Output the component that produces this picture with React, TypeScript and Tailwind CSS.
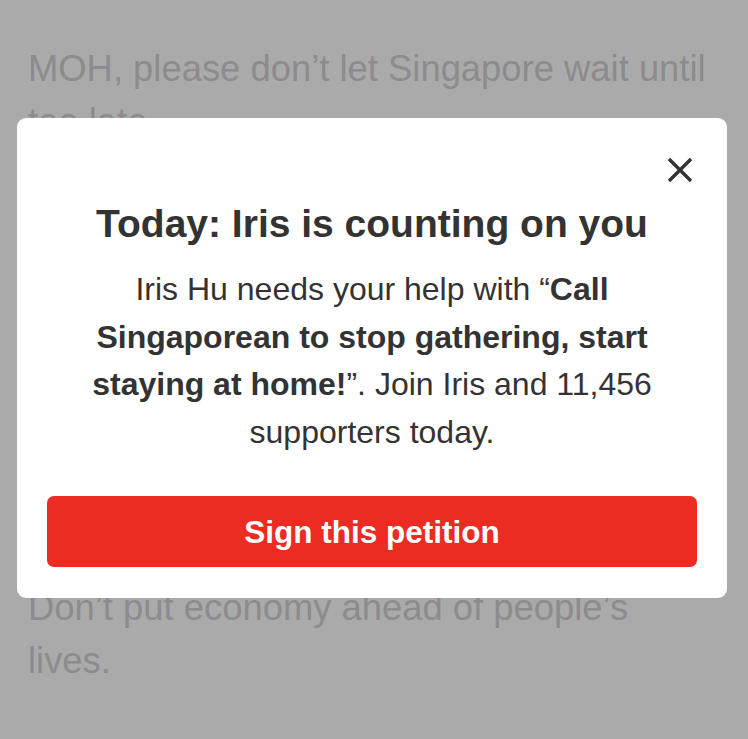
import React from 'react';

const CloseIcon: React.FC = () => (
  <svg width="26" height="26" viewBox="0 0 26 26" fill="none" stroke="#333333" strokeWidth={3.4} strokeLinecap="butt">
    <path d="M2 2L24 24M24 2L2 24" />
  </svg>
);

export default function App() {
  return (
    <div className="relative w-[748px] h-[739px] overflow-hidden bg-[#aaaaaa] font-['Liberation_Sans',Arial,sans-serif]">
      {/* page behind the dialog */}
      <div className="px-[28px] pt-[42px] text-[36.4px] leading-[53px] text-[#8d8b8d] font-light">
        <p>
          MOH, please don’t let Singapore wait until
          <br />
          too late.
        </p>
        <p className="mt-[433px]">
          Don’t put economy ahead of people’s
          <br />
          lives.
        </p>
      </div>

      {/* dialog */}
      <div className="absolute left-[17px] top-[118px] w-[710px] rounded-[9px] bg-white px-[30px] pt-[40px] pb-[31px]">
        <div className="flex justify-end pr-[4px] h-[24px] items-center">
          <button className="flex items-center justify-center w-[26px] h-[26px]">
            <CloseIcon />
          </button>
        </div>

        <h2 className="mt-[20px] text-center text-[39px] leading-[44px] font-bold text-[#333333]">
          Today: Iris is counting on you
        </h2>

        <p className="mt-[20px] text-center text-[32px] leading-[47.5px] text-[#333333]">
          Iris Hu needs your help with “<b>Call</b>
          <br />
          <b>Singaporean to stop gathering, start</b>
          <br />
          <b>staying at home!</b>”. Join Iris and 11,456
          <br />
          supporters today.
        </p>

        <button className="mt-[40px] w-full h-[71px] pt-[3px] rounded-[7px] bg-[#ec2b23] text-white text-[31.5px] font-bold">
          Sign this petition
        </button>
      </div>
    </div>
  );
}
